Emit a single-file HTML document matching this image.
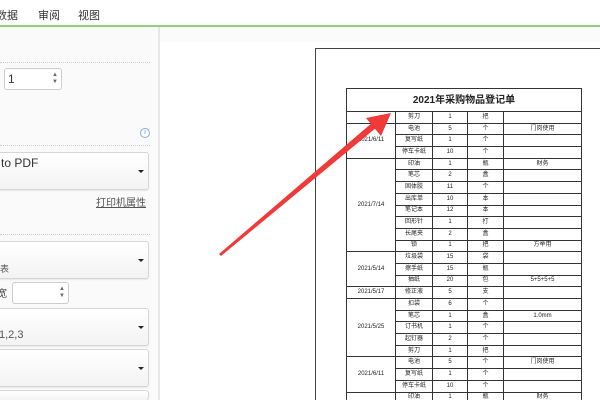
<!DOCTYPE html>
<html style="overflow:hidden;width:600px;height:400px"><head><meta charset="utf-8"><style>
*{margin:0;padding:0;box-sizing:border-box}
body{width:600px;height:400px;overflow:hidden;background:#fff;font-family:"Liberation Sans","Noto Sans CJK SC",sans-serif;position:relative;color:#333}
.a{position:absolute}
.tab{font-size:11px;top:7px;color:#333}
.sel{position:absolute;left:-4px;width:153px;border:1px solid #d6d6d6;border-radius:3px;background:linear-gradient(#fff,#f3f3f3);box-shadow:0 1px 1px rgba(0,0,0,.08)}
.car{position:absolute;right:4px;width:0;height:0;border-left:3px solid transparent;border-right:3px solid transparent;border-top:3px solid #222}
.dot{position:absolute;left:0;width:150px;border-top:1px dotted #ccc}
.inp{position:absolute;border:1px solid #ccc;border-radius:3px;background:#fff}
.sp{position:absolute;right:3px;font-size:6px;color:#666;line-height:7px}
table{position:absolute;left:346px;top:88px;border-collapse:collapse;font-size:6px;font-family:"Liberation Sans","Noto Sans CJK SC",sans-serif;color:#222}
td{border:1px solid #333;text-align:center;height:11.7px;padding:0;line-height:9px}
</style></head><body>
<div class="a" style="left:0;top:0;width:600px;height:26px;background:#fff"></div>
<div class="a tab" style="left:-4px">数据</div>
<div class="a tab" style="left:38px">审阅</div>
<div class="a tab" style="left:78px">视图</div>
<div class="a" style="left:0;top:25px;width:600px;height:2px;background:#8fd07e"></div>
<div class="a" style="left:0;top:27px;width:158px;height:373px;background:#fafafa"></div>
<div class="a" style="left:158px;top:27px;width:2px;height:373px;background:#e6e6e6"></div>
<div class="a" style="left:160px;top:27px;width:440px;height:15px;background:#fbfbfb"></div>
<div class="dot" style="top:62px"></div>
<div class="inp" style="left:4px;top:68px;width:58px;height:22px"><span class="a" style="left:3px;top:3px;font-size:12px">1</span><span class="sp" style="top:3px">▲<br>▼</span></div>
<div class="a" style="left:140px;top:128px;width:10px;height:10px;border:1px solid #8ab0d8;border-radius:50%;color:#6a9ad0;font-size:7px;text-align:center;line-height:8px">i</div>
<div class="dot" style="top:145px"></div>
<div class="sel" style="top:152px;height:38px"><span class="a" style="left:4px;top:3px;font-size:12px">to PDF</span><div class="car" style="top:17px"></div></div>
<div class="a" style="left:96px;top:194px;font-size:10px;color:#555;text-decoration:underline">打印机属性</div>
<div class="dot" style="top:234px"></div>
<div class="sel" style="top:241px;height:38px"><span class="a" style="left:3px;top:20px;font-size:9px;color:#555">表</span><div class="car" style="top:17px"></div></div>
<div class="a" style="left:-3px;top:285px;font-size:10px;color:#444">宽</div>
<div class="inp" style="left:12px;top:282px;width:57px;height:22px"><span class="sp" style="top:3px">▲<br>▼</span></div>
<div class="sel" style="top:308px;height:38px"><span class="a" style="left:2px;top:20px;font-size:11px;color:#555">1,2,3</span><div class="car" style="top:17px"></div></div>
<div class="sel" style="top:349px;height:38px"><div class="car" style="top:17px"></div></div>
<div class="sel" style="top:390px;height:10px;border-bottom:none"></div>
<div class="a" style="left:315px;top:48px;width:285px;height:352px;border:1px solid #444;border-right:none;border-bottom:none;background:#fff"></div>
<table>
<colgroup><col style="width:49px"><col style="width:37px"><col style="width:35px"><col style="width:36px"><col style="width:78px"></colgroup>
<tr><td colspan="5" style="height:23px;font-size:10px;font-weight:bold">2021年采购物品登记单</td></tr>
<tr><td></td><td>剪刀</td><td>1</td><td>把</td><td></td></tr>
<tr><td rowspan="3">2021/6/11</td><td>电池</td><td>5</td><td>个</td><td>门岗使用</td></tr>
<tr><td>复写纸</td><td>1</td><td>个</td><td></td></tr>
<tr><td>停车卡纸</td><td>10</td><td>个</td><td></td></tr>
<tr><td rowspan="8">2021/7/14</td><td>印油</td><td>1</td><td>瓶</td><td>财务</td></tr>
<tr><td>笔芯</td><td>2</td><td>盒</td><td></td></tr>
<tr><td>固体胶</td><td>11</td><td>个</td><td></td></tr>
<tr><td>出库单</td><td>10</td><td>本</td><td></td></tr>
<tr><td>笔记本</td><td>12</td><td>本</td><td></td></tr>
<tr><td>回形针</td><td>1</td><td>打</td><td></td></tr>
<tr><td>长尾夹</td><td>2</td><td>盒</td><td></td></tr>
<tr><td>锁</td><td>1</td><td>把</td><td>方举用</td></tr>
<tr><td rowspan="3">2021/5/14</td><td>垃圾袋</td><td>15</td><td>袋</td><td></td></tr>
<tr><td>擦手纸</td><td>15</td><td>瓶</td><td></td></tr>
<tr><td>抽纸</td><td>20</td><td>包</td><td>5+5+5+5</td></tr>
<tr><td>2021/5/17</td><td>修正液</td><td>5</td><td>支</td><td></td></tr>
<tr><td rowspan="5">2021/5/25</td><td>扣袋</td><td>6</td><td>个</td><td></td></tr>
<tr><td>笔芯</td><td>1</td><td>盒</td><td>1.0mm</td></tr>
<tr><td>订书机</td><td>1</td><td>个</td><td></td></tr>
<tr><td>起钉器</td><td>2</td><td>个</td><td></td></tr>
<tr><td>剪刀</td><td>1</td><td>把</td><td></td></tr>
<tr><td rowspan="3">2021/6/11</td><td>电池</td><td>5</td><td>个</td><td>门岗使用</td></tr>
<tr><td>复写纸</td><td>1</td><td>个</td><td></td></tr>
<tr><td>停车卡纸</td><td>10</td><td>个</td><td></td></tr>
<tr><td></td><td>印油</td><td>1</td><td>瓶</td><td>财务</td></tr>
</table>
<svg class="a" style="left:0;top:0" width="600" height="400"><polygon points="219,254 221,256 377,127 373,122" fill="#f03a3a"/><polygon points="391,113 366,118 381,136" fill="#f03a3a"/></svg>
</body></html>
